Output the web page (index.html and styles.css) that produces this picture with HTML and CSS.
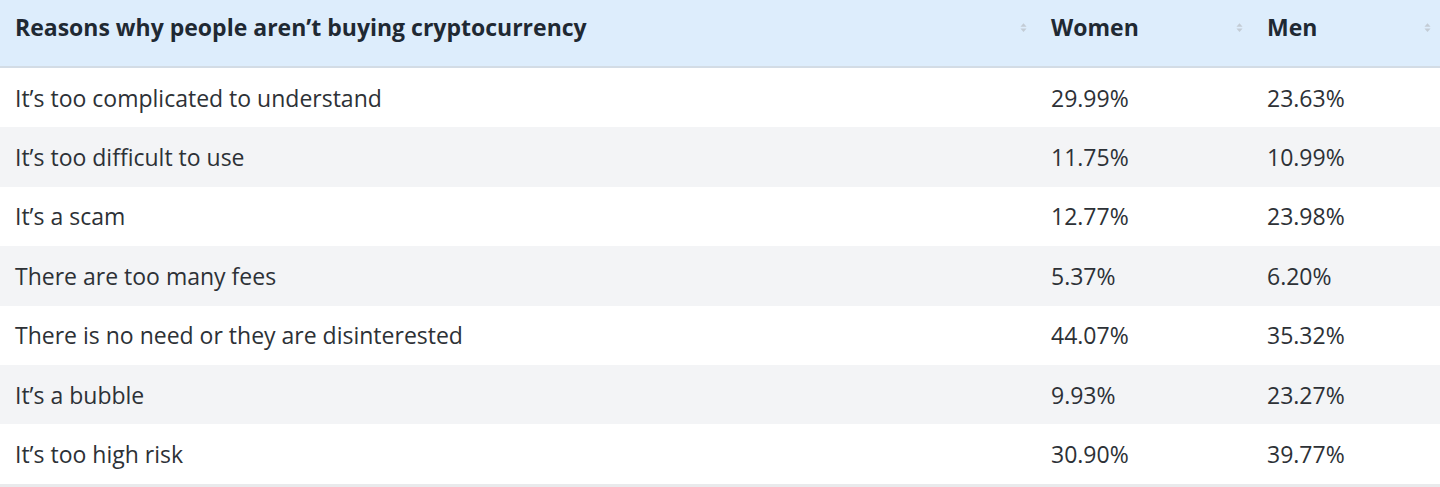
FILE: index.html
```html
<!DOCTYPE html>
<html lang="en">
<head>
<meta charset="utf-8">
<link rel="stylesheet" href="styles.css">
</head>
<body>
<table class="data">
  <colgroup>
    <col class="c1"><col class="c2"><col class="c3">
  </colgroup>
  <thead>
    <tr>
      <th><span class="th-in"><span>Reasons why people aren’t buying cryptocurrency</span><svg class="sort" viewBox="0 0 8 12" width="7" height="11"><path d="M4 1 L7.5 5 H0.5 Z M4 11 L7.5 7 H0.5 Z"/></svg></span></th>
      <th><span class="th-in"><span>Women</span><svg class="sort" viewBox="0 0 8 12" width="7" height="11"><path d="M4 1 L7.5 5 H0.5 Z M4 11 L7.5 7 H0.5 Z"/></svg></span></th>
      <th><span class="th-in"><span>Men</span><svg class="sort" viewBox="0 0 8 12" width="7" height="11"><path d="M4 1 L7.5 5 H0.5 Z M4 11 L7.5 7 H0.5 Z"/></svg></span></th>
    </tr>
  </thead>
  <tbody>
    <tr><td>It’s too complicated to understand</td><td>29.99%</td><td>23.63%</td></tr>
    <tr><td>It’s too difficult to use</td><td>11.75%</td><td>10.99%</td></tr>
    <tr><td>It’s a scam</td><td>12.77%</td><td>23.98%</td></tr>
    <tr><td>There are too many fees</td><td>5.37%</td><td>6.20%</td></tr>
    <tr><td>There is no need or they are disinterested</td><td>44.07%</td><td>35.32%</td></tr>
    <tr><td>It’s a bubble</td><td>9.93%</td><td>23.27%</td></tr>
    <tr><td>It’s too high risk</td><td>30.90%</td><td>39.77%</td></tr>
  </tbody>
</table>
</body>
</html>
```
FILE: styles.css
```css
html, body {
  margin: 0;
  padding: 0;
  background: #ffffff;
}
body {
  font-family: "Open Sans", "Lato", sans-serif;
  color: #2b2f33;
}
.data {
  width: 1440px;
  border-collapse: collapse;
  table-layout: fixed;
  border-bottom: 4px solid #e9eaec;
}
.c1 { width: 1036px; }
.c2 { width: 216px; }
.c3 { width: 188px; }
.data th {
  background: #ddedfc;
  height: 67px;
  box-sizing: border-box;
  padding: 0 9px 12px 15px;
  text-align: left;
  font-size: 23px;
  font-weight: 700;
  color: #1f2933;
  border-bottom: 2px solid #d3dce5;
  vertical-align: middle;
}
.th-in {
  display: flex;
  align-items: center;
  justify-content: space-between;
}
.sort {
  fill: #c3ccd5;
  flex: none;
}
.data td {
  height: 59.4px;
  padding: 0 15px;
  font-size: 23px;
  font-weight: 400;
  color: #2d3136;
  vertical-align: middle;
}
.data tbody tr:nth-child(even) td {
  background: #f3f4f6;
}
```
